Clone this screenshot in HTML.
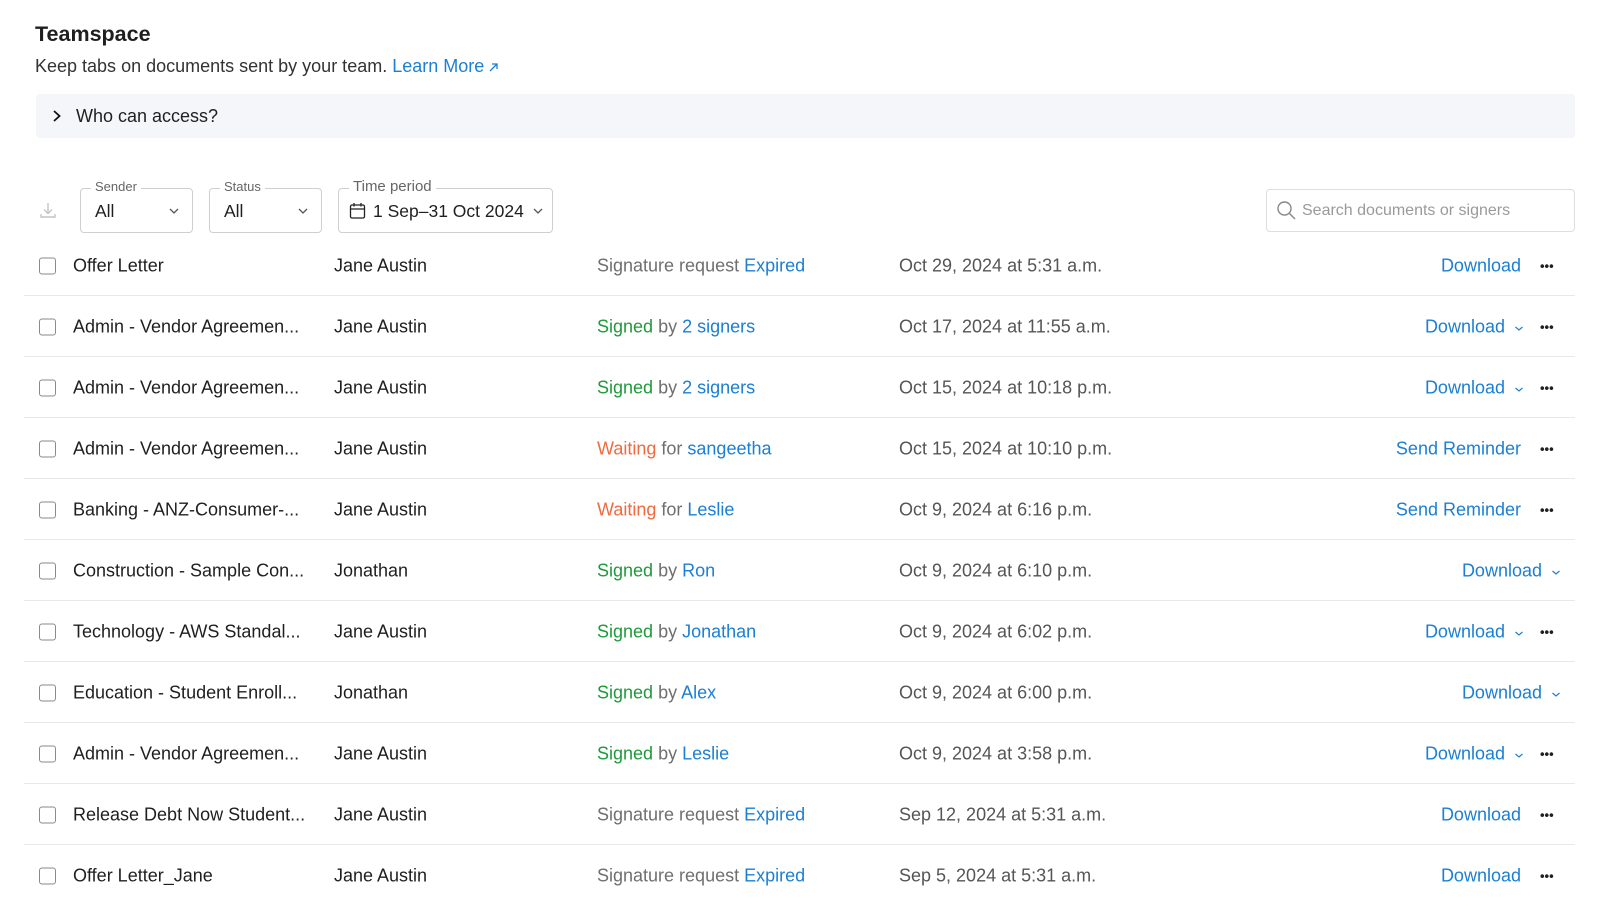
<!DOCTYPE html>
<html><head><meta charset="utf-8"><style>
*{box-sizing:border-box;margin:0;padding:0}
body{width:1600px;height:898px;background:#fff;font-family:"Liberation Sans",sans-serif;color:#1f1f1f;position:relative;overflow:hidden}
.a{position:absolute;white-space:nowrap}
.b{color:#1b7fd4}.g{color:#1f9a3a}.o{color:#ef6a3f}.m{color:#6f6f6f}
.row{position:absolute;left:24px;width:1551px;height:61px;font-size:18px}
.row>*{position:absolute;top:50%;transform:translateY(-50%);white-space:nowrap}
.sep{position:absolute;left:24px;width:1551px;height:1px;background:#e8e8e8}
.cb{left:15px;width:17px;height:17px;border:1.5px solid #8a8a8a;border-radius:3px}
.fl{position:absolute;top:188px;height:45px;border:1px solid #cfcfcf;border-radius:4px}
.lab{position:absolute;top:-10px;left:10px;background:#fff;padding:0 4px;font-size:13px;color:#666}
.val{position:absolute;top:12px;left:14px;font-size:17.5px}
.chev{position:absolute;right:12px;top:17px}
</style></head><body>
<div class="a" style="left:35px;top:22px;font-size:21.5px;font-weight:bold">Teamspace</div>
<div class="a" style="left:35px;top:56px;font-size:18px;color:#333">Keep tabs on documents sent by your team. <span class="b">Learn More</span><svg width="12" height="12" viewBox="0 0 12 12" style="margin-left:3px;vertical-align:-1px"><path d="M3 10L9.5 3.5M5 3H10V8" stroke="#1b7fd4" stroke-width="1.3" fill="none"/></svg></div>
<div class="a" style="left:36px;top:94px;width:1539px;height:44px;background:#f4f6f9;border-radius:3px"></div>
<svg class="a" style="left:51px;top:109px" width="12" height="14" viewBox="0 0 12 14"><path d="M3 2L8.5 7L3 12" stroke="#111" stroke-width="1.8" fill="none"/></svg>
<div class="a" style="left:76px;top:106px;font-size:18px">Who can access?</div>

<svg class="a" style="left:38px;top:200px" width="20" height="20" viewBox="0 0 20 20"><path d="M10 3V13M6 9.5L10 13.5L14 9.5M3 14V17H17V14" stroke="#c4c4c4" stroke-width="1.4" fill="none"/></svg>
<div class="fl" style="left:80px;width:113px"><span class="lab">Sender</span><span class="val">All</span><svg class="chev" width="12" height="10" viewBox="0 0 12 10"><path d="M2 3L6 7L10 3" stroke="#555" stroke-width="1.3" fill="none"/></svg></div>
<div class="fl" style="left:209px;width:113px"><span class="lab">Status</span><span class="val">All</span><svg class="chev" width="12" height="10" viewBox="0 0 12 10"><path d="M2 3L6 7L10 3" stroke="#555" stroke-width="1.3" fill="none"/></svg></div>
<div class="fl" style="left:338px;width:215px"><span class="lab" style="font-size:15px;top:-11px">Time period</span>
<svg style="position:absolute;left:10px;top:13px" width="17" height="18" viewBox="0 0 17 18"><rect x="1.5" y="3" width="14" height="13" rx="1.5" stroke="#222" stroke-width="1.3" fill="none"/><path d="M1.5 7H15.5M5 1V4.5M12 1V4.5" stroke="#222" stroke-width="1.3"/></svg>
<span class="val" style="left:34px">1 Sep–31 Oct 2024</span><svg class="chev" style="right:8px" width="12" height="10" viewBox="0 0 12 10"><path d="M2 3L6 7L10 3" stroke="#555" stroke-width="1.3" fill="none"/></svg></div>
<div class="a" style="left:1266px;top:189px;width:309px;height:43px;border:1px solid #dedede;border-radius:4px"></div>
<svg class="a" style="left:1276px;top:200px" width="21" height="21" viewBox="0 0 21 21"><circle cx="8.5" cy="8.5" r="6.5" stroke="#888" stroke-width="1.4" fill="none"/><path d="M13.5 13.5L19 19" stroke="#888" stroke-width="1.4"/></svg>
<div class="a" style="left:1302px;top:202px;font-size:16px;color:#9a9a9a">Search documents or signers</div>

<div id="rows"></div>
<script>
var R=[
["Offer Letter","Jane Austin",'<span class="m">Signature request</span> <span class="b">Expired</span>',"Oct 29, 2024 at 5:31 a.m.",0],
["Admin - Vendor Agreemen...","Jane Austin",'<span class="g">Signed</span> <span class="m">by</span> <span class="b">2 signers</span>',"Oct 17, 2024 at 11:55 a.m.",1],
["Admin - Vendor Agreemen...","Jane Austin",'<span class="g">Signed</span> <span class="m">by</span> <span class="b">2 signers</span>',"Oct 15, 2024 at 10:18 p.m.",1],
["Admin - Vendor Agreemen...","Jane Austin",'<span class="o">Waiting</span> <span class="m">for</span> <span class="b">sangeetha</span>',"Oct 15, 2024 at 10:10 p.m.",2],
["Banking - ANZ-Consumer-...","Jane Austin",'<span class="o">Waiting</span> <span class="m">for</span> <span class="b">Leslie</span>',"Oct 9, 2024 at 6:16 p.m.",2],
["Construction - Sample Con...","Jonathan",'<span class="g">Signed</span> <span class="m">by</span> <span class="b">Ron</span>',"Oct 9, 2024 at 6:10 p.m.",3],
["Technology - AWS Standal...","Jane Austin",'<span class="g">Signed</span> <span class="m">by</span> <span class="b">Jonathan</span>',"Oct 9, 2024 at 6:02 p.m.",1],
["Education - Student Enroll...","Jonathan",'<span class="g">Signed</span> <span class="m">by</span> <span class="b">Alex</span>',"Oct 9, 2024 at 6:00 p.m.",3],
["Admin - Vendor Agreemen...","Jane Austin",'<span class="g">Signed</span> <span class="m">by</span> <span class="b">Leslie</span>',"Oct 9, 2024 at 3:58 p.m.",1],
["Release Debt Now Student...","Jane Austin",'<span class="m">Signature request</span> <span class="b">Expired</span>',"Sep 12, 2024 at 5:31 a.m.",0],
["Offer Letter_Jane","Jane Austin",'<span class="m">Signature request</span> <span class="b">Expired</span>',"Sep 5, 2024 at 5:31 a.m.",0]];
var ch='<svg width="10" height="8" viewBox="0 0 10 8"><path d="M1.5 2.5L5 5.5L8.5 2.5" stroke="#1b7fd4" stroke-width="1.2" fill="none"/></svg>';
var dots='<span style="left:1516px;font-size:13px;font-weight:bold;letter-spacing:0px">•••</span>';
var h='';
R.forEach(function(r,i){var c=265+61*i;
var act;
if(r[4]==0)act='<span class="b" style="right:54px">Download</span>'+dots;
else if(r[4]==1)act='<span class="b" style="right:70px">Download</span><span style="left:1490px">'+ch+'</span>'+dots;
else if(r[4]==2)act='<span class="b" style="right:54px">Send Reminder</span>'+dots;
else act='<span class="b" style="right:33px">Download</span><span style="left:1527px">'+ch+'</span>';
h+='<div class="row" style="top:'+(c-30)+'px"><span class="cb"></span><span style="left:49px">'+r[0]+'</span><span style="left:310px">'+r[1]+'</span><span style="left:573px">'+r[2]+'</span><span style="left:875px;color:#555">'+r[3]+'</span>'+act+'</div>';
if(i<10)h+='<div class="sep" style="top:'+(c+30)+'px"></div>';});
document.getElementById('rows').innerHTML=h;
</script>
</body></html>
